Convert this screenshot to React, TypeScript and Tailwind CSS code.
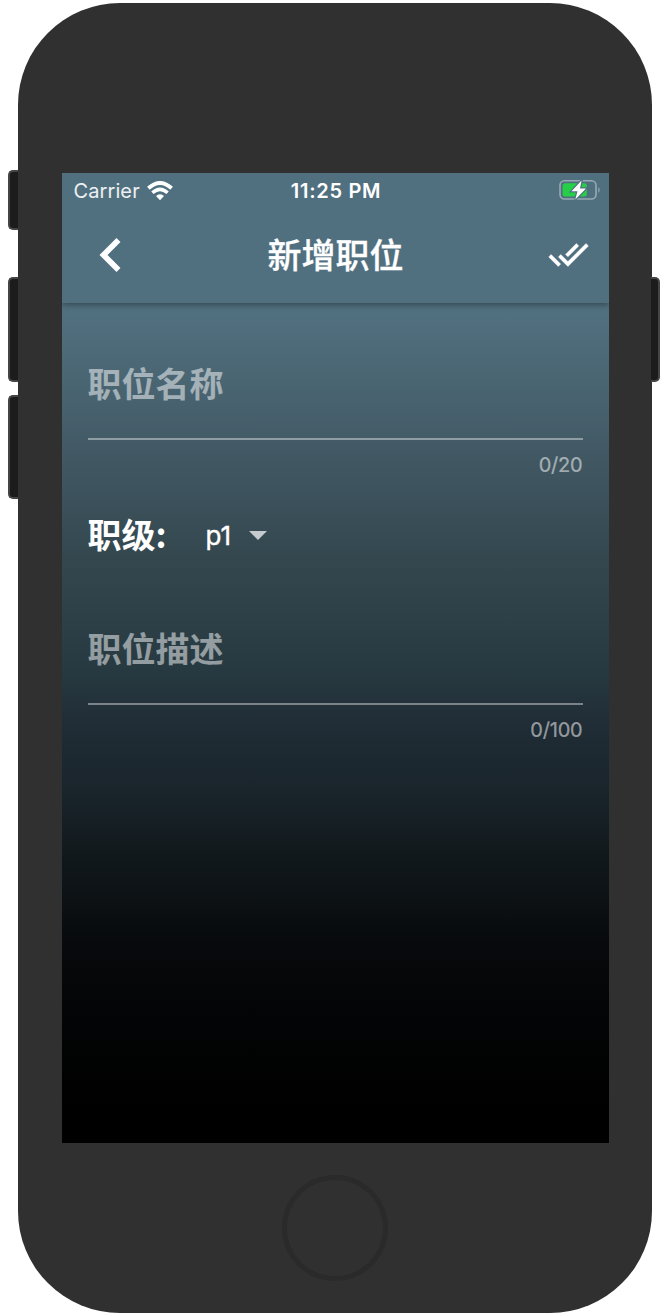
import React from "react";

const sans = "font-['Inter','Noto_Sans_CJK_SC',sans-serif]";
const cjk = "font-['Noto_Sans_CJK_SC',sans-serif]";

function SideButton({ className }: { className: string }) {
  return <div className={`absolute border-2 border-[#454545] bg-[#1c1c1c] ${className}`} />;
}

function StatusBar() {
  return (
    <div className={`grid h-[35px] grid-cols-3 items-center pl-[12px] pr-[8px] text-white ${sans}`}>
      <div className="flex items-center gap-[7px]">
        <span className="text-[20px] leading-none tracking-[0.1px] text-white/90">Carrier</span>
        <svg width="26" height="20" viewBox="0 0 26 20" fill="none" stroke="#fff">
          <path d="M1.4 7.3Q13-3.3 24.6 7.3" strokeWidth="3.9" />
          <path d="M5.4 11.8Q13 4.9 20.6 11.8" strokeWidth="3.5" />
          <path d="M13 19.2L9 15Q13 11.6 17 15Z" fill="#fff" stroke="none" />
        </svg>
      </div>
      <span className="-ml-[2px] pt-px text-center text-[20px] leading-none font-semibold tracking-[0.7px] whitespace-nowrap">11:25 PM</span>
      <svg className="mb-[2px] justify-self-end" width="42" height="24" viewBox="0 0 42 24">
        <rect x="1" y="2.8" width="36" height="18.2" rx="4.5" fill="none" stroke="#97a9b2" strokeWidth="1.6" />
        <path d="M39.4 9Q42 12 39.4 15Z" fill="#97a9b2" />
        <rect x="3.6" y="5.3" width="24.2" height="13.2" rx="2.5" fill="#25cf48" />
        <path d="M22.6 2.5L12.5 13.3h6L16.3 21.5 27 10.4h-6Z" fill="#fff" stroke="#51707f" strokeWidth="2.4" paintOrder="stroke" />
      </svg>
    </div>
  );
}

function AppBar() {
  return (
    <div className="flex h-[95px] items-center justify-between pb-[2px] pl-[37px] pr-[20px]">
      <svg width="22" height="34" viewBox="8 6 7.41 12" fill="#fff">
        <path d="M15.41 7.41L14 6l-6 6 6 6 1.41-1.41L10.83 12z" />
      </svg>
      <h1 className={`mb-px pl-[3px] text-[34px] leading-[50px] font-medium text-white [-webkit-text-stroke:0.3px_white] ${cjk}`}>新增职位</h1>
      <svg width="41" height="41" viewBox="0 0 24 24" fill="#fff" stroke="#fff" strokeWidth="0.25">
        <path d="M18 7l-1.41-1.41-6.34 6.34 1.41 1.41L18 7zm4.24-1.41L11.66 16.17 7.48 12l-1.41 1.41L11.66 19l12-12-1.42-1.41zM.41 13.41L6 19l1.41-1.41L1.83 12 .41 13.41z" />
      </svg>
    </div>
  );
}

function Field({ label, count }: { label: string; count: string }) {
  return (
    <div className="flex flex-col">
      <div className={`h-[80px] text-[34px] leading-[50px] font-bold text-white/50 ${cjk}`}>{label}</div>
      <div className="h-[2px] bg-white/40" />
      <div className={`mt-[12px] self-end text-[20px] leading-[26px] tracking-[-0.2px] text-white/50 [-webkit-text-stroke:0.2px_rgba(255,255,255,0.5)] ${sans}`}>{count}</div>
    </div>
  );
}

export default function App() {
  return (
    <div className="h-[1316px] w-[670px] bg-white pl-[18px] pt-[3px]">
      <div className="relative flex h-[1310px] w-[634px] flex-col items-center rounded-[102px] bg-[#303030] pt-[170px]">
        <SideButton className="left-[-10px] top-[167px] h-[60px] w-[10px] rounded-l-[5px] border-r-0" />
        <SideButton className="left-[-10px] top-[274px] h-[105px] w-[10px] rounded-l-[5px] border-r-0" />
        <SideButton className="left-[-10px] top-[392px] h-[104px] w-[10px] rounded-l-[5px] border-r-0" />
        <SideButton className="left-[633px] top-[274px] h-[105px] w-[9px] rounded-r-[5px] border-l-0" />
        <div className="h-[970px] w-[547px] overflow-hidden bg-[linear-gradient(180deg,#51707f_140px,#445c68_262px,#34474f_385px,#273940_500px,#212e37_545px,#19242b_620px,#10171a_690px,#07090c_775px,#040506_830px,#000_935px)]">
          <header className="bg-[#51707f] shadow-[0_2px_6px_rgba(0,0,0,0.35)]">
            <StatusBar />
            <AppBar />
          </header>
          <main className="flex flex-col px-[26px] pt-[55px]">
            <Field label="职位名称" count="0/20" />
            <div className="mt-[31px] mb-[64px] flex h-[50px] items-center text-white">
              <span className={`text-[34px] leading-[50px] font-bold ${cjk}`}>职级:</span>
              <span className={`ml-[39px] pt-[3px] text-[26px] leading-[30px] [-webkit-text-stroke:0.4px_white] ${sans}`}>p1</span>
              <svg className="mt-[2px] ml-[18px]" width="18" height="9" viewBox="0 0 18 9">
                <path d="M0 0h18L9 9z" fill="#c5cbce" />
              </svg>
            </div>
            <Field label="职位描述" count="0/100" />
          </main>
        </div>
        <div className="mt-[32px] h-[106px] w-[106px] rounded-full border-[5px] border-[#2a2a2a]" />
      </div>
    </div>
  );
}
